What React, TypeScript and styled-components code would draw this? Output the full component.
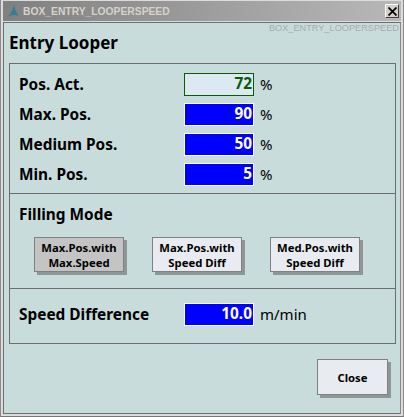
import React from 'react';
import styled, { createGlobalStyle } from 'styled-components';

const GlobalStyle = createGlobalStyle`
  html, body {
    margin: 0;
    padding: 0;
    background: #d4d0c8;
  }
  body {
    font-family: "Noto Sans", "DejaVu Sans", sans-serif;
  }
`;

const Window = styled.div`
  width: 404px;
  height: 417px;
  box-sizing: border-box;
  display: flex;
  flex-direction: column;
  padding: 1px 2px 2px 2px;
  background: #dcdcdc;
  border-left: 1px solid #8a8a8a;
  border-right: 1px solid #8a8a8a;
  border-bottom: 1px solid #777;
`;

const TitleBar = styled.div`
  height: 20px;
  flex: none;
  display: flex;
  align-items: center;
  padding: 0 2px 0 3px;
  background: linear-gradient(90deg, #808080, #b8b8b8);
`;

const TitleText = styled.span`
  margin-left: 3px;
  font-family: "Liberation Sans", sans-serif;
  font-size: 10.3px;
  font-weight: 700;
  color: #d6d2ca;
  flex: 1;
  white-space: nowrap;
`;

const CloseBox = styled.div`
  width: 14px;
  height: 14px;
  box-sizing: border-box;
  display: flex;
  align-items: center;
  justify-content: center;
  background: #d4d0c8;
  border: 1px solid;
  border-color: #fff #404040 #404040 #fff;
`;

const Client = styled.div`
  flex: 1;
  display: flex;
  flex-direction: column;
  padding: 0 5px;
  background: #c8dcdc;
  border: 1px solid #6e6e6e;
  border-right-color: #8a8a8a;
  margin-top: 1px;
  position: relative;
`;

const Watermark = styled.span`
  position: absolute;
  top: 0;
  right: 1px;
  font-family: "Liberation Sans", sans-serif;
  font-size: 9.2px;
  color: #a6acac;
`;

const Heading = styled.h1`
  margin: 10px 0 0;
  height: 29px;
  font-size: 17px;
  line-height: 20px;
  font-weight: 700;
  color: #000;
`;

const Panel = styled.div`
  width: 387px;
  box-sizing: border-box;
  border: 1px solid #6a6e6e;
  margin-top: 1px;
  display: flex;
  flex-direction: column;
`;

const Section = styled.section<{ $h: number }>`
  padding: 9px 9px 0;
  box-sizing: border-box;
  height: ${(p) => p.$h}px;
  display: flex;
  flex-direction: column;
  gap: 7px;
  border-bottom: 1px solid #6a6e6e;
  &:last-child {
    border-bottom: 0;
  }
`;

const Row = styled.div`
  display: grid;
  grid-template-columns: 165px 70px auto;
  align-items: center;
  height: 23px;
`;

const SpeedRow = styled(Row)`
  margin-top: 5px;
`;

const Label = styled.span`
  font-size: 15.4px;
  font-weight: 700;
  color: #000;
  white-space: nowrap;
`;

const Field = styled.div<{ $actual?: boolean }>`
  height: 23px;
  box-sizing: border-box;
  padding: 0 1px;
  text-align: right;
  font-size: 15.4px;
  line-height: 20px;
  font-weight: 700;
  border: 1px solid ${(p) => (p.$actual ? '#0a5a0a' : '#fff')};
  background: ${(p) => (p.$actual ? '#dce9f0' : '#0000ff')};
  color: ${(p) => (p.$actual ? '#0a5a0a' : '#fff')};
`;

const Unit = styled.span`
  margin: 0 0 2px 6px;
  font-size: 15px;
  color: #000;
`;

const SectionTitle = styled(Label)`
  line-height: 22px;
  margin-top: 1px;
`;

const ButtonRow = styled.div`
  display: flex;
  gap: 28px;
  padding-left: 15px;
  margin-top: 4px;
`;

const ModeButton = styled.button<{ $active?: boolean }>`
  width: 90px;
  height: 35px;
  padding: 0;
  box-sizing: border-box;
  font-family: inherit;
  font-size: 11.3px;
  line-height: 15px;
  font-weight: 700;
  color: #000;
  white-space: pre-line;
  background: ${(p) => (p.$active ? '#c4c4c4' : '#e8ecf0')};
  border: 1px solid #808080;
  box-shadow: 3px 3px 0 #8e9696;
`;

const Footer = styled.div`
  display: flex;
  justify-content: flex-end;
  padding: 15px 7px 0 0;
`;

const CloseButton = styled(ModeButton)`
  width: 71px;
  height: 36px;
`;

const Logo = () => (
  <svg width="14" height="14" viewBox="0 0 14 14">
    <path d="M1 13 C4 11 6 8 8 1 C9 6 11 10 13 12 C9 10 5 11 1 13 Z" fill="#2f7f97" />
  </svg>
);

const CloseX = () => (
  <svg width="9" height="9" viewBox="0 0 9 9">
    <path d="M0.5 0.5 L8.5 8.5 M8.5 0.5 L0.5 8.5" stroke="#000" strokeWidth="1.7" />
  </svg>
);

const positions = [
  { label: 'Pos. Act.', value: '72', actual: true },
  { label: 'Max. Pos.', value: '90' },
  { label: 'Medium Pos.', value: '50' },
  { label: 'Min. Pos.', value: '5' },
];

const modes = ['Max.Pos.with\nMax.Speed', 'Max.Pos.with\nSpeed Diff', 'Med.Pos.with\nSpeed Diff'];

export default function App() {
  return (
    <>
      <GlobalStyle />
      <Window>
        <TitleBar>
          <Logo />
          <TitleText>BOX_ENTRY_LOOPERSPEED</TitleText>
          <CloseBox>
            <CloseX />
          </CloseBox>
        </TitleBar>
        <Client>
          <Watermark>BOX_ENTRY_LOOPERSPEED</Watermark>
          <Heading>Entry Looper</Heading>
          <Panel>
            <Section $h={130}>
              {positions.map((row) => (
                <Row key={row.label}>
                  <Label>{row.label}</Label>
                  <Field $actual={row.actual}>{row.value}</Field>
                  <Unit>%</Unit>
                </Row>
              ))}
            </Section>
            <Section $h={95}>
              <SectionTitle>Filling Mode</SectionTitle>
              <ButtonRow>
                {modes.map((mode, index) => (
                  <ModeButton key={mode} $active={index === 0}>
                    {mode}
                  </ModeButton>
                ))}
              </ButtonRow>
            </Section>
            <Section $h={54}>
              <SpeedRow>
                <Label>Speed Difference</Label>
                <Field>10.0</Field>
                <Unit>m/min</Unit>
              </SpeedRow>
            </Section>
          </Panel>
          <Footer>
            <CloseButton>Close</CloseButton>
          </Footer>
        </Client>
      </Window>
    </>
  );
}
